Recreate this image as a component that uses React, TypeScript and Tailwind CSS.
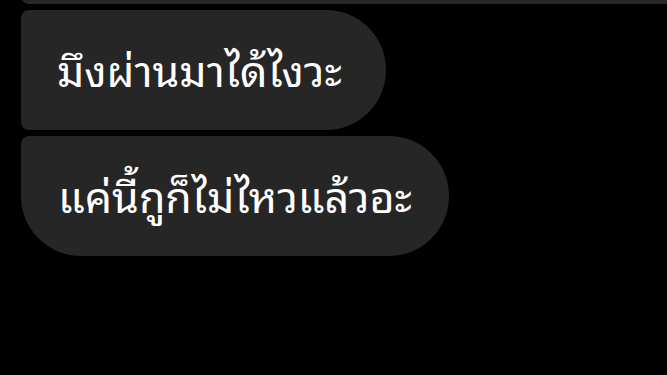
export default function App() {
  const thai = "font-['Noto_Sans_Thai_Looped','Noto_Sans_Thai','Noto_Sans','DejaVu_Sans',sans-serif]";

  return (
    <div className="w-[667px] h-[375px] overflow-hidden bg-black">
      <div className="flex flex-col items-start gap-[6px] pl-[21px]">
        {/* previous message, mostly scrolled off */}
        <div className="-mt-[36px] h-[40px] w-[700px] rounded-bl-[8px] bg-[#262626]" />

        <div
          className={`flex h-[120px] items-center rounded-l-[8px] rounded-r-[60px] bg-[#262626] pb-[4px] pl-[36px] pr-[44px] text-[43px] leading-[52px] text-white ${thai}`}
        >
          มึงผ่านมาได้ไงวะ
        </div>

        <div
          className={`flex h-[120px] items-center rounded-tl-[8px] rounded-bl-[60px] rounded-r-[60px] bg-[#262626] pb-[4px] pl-[37px] pr-[37px] text-[43px] leading-[52px] text-white ${thai}`}
        >
          แค่นี้กูก็ไม่ไหวแล้วอะ
        </div>
      </div>
    </div>
  );
}
